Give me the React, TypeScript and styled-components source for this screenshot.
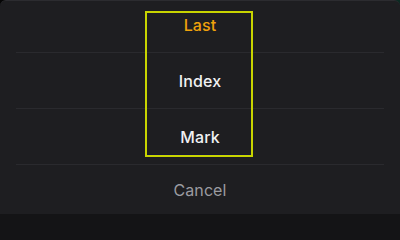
import React from "react";
import styled, { createGlobalStyle } from "styled-components";

const Global = createGlobalStyle`
  html, body { margin: 0; padding: 0; background: #141416; }
  body {
    width: 400px;
    height: 218px;
    overflow: hidden;
    font-family: "Inter", "Noto Sans", sans-serif;
  }
`;

const Backdrop = styled.div`
  width: 400px;
  height: 214px;
  background: linear-gradient(90deg, #050505 50%, #0c2a22 50%);
`;

const Sheet = styled.div`
  position: relative;
  width: 400px;
  height: 214px;
  box-sizing: border-box;
  background: #1e1e21;
  border-top: 1px solid #2c2c30;
  border-radius: 6px 6px 0 0;
  overflow: hidden;
`;

const List = styled.div`
  display: flex;
  flex-direction: column;
  margin-top: -4px;
`;

const Option = styled.div<{ $active?: boolean; $muted?: boolean; $last?: boolean }>`
  height: ${(p) => (p.$last ? "50px" : "56px")};
  display: flex;
  align-items: center;
  justify-content: center;
  margin: 0 16px;
  border-bottom: ${(p) => (p.$last ? "none" : "1px solid #2a2a2e")};
  box-sizing: border-box;
  font-size: 16px;
  font-weight: ${(p) => (p.$muted ? 400 : 500)};
  color: ${(p) => (p.$active ? "#f0a20b" : p.$muted ? "#9b9ba0" : "#f0f1f3")};
  letter-spacing: 0.1px;
`;

const Focus = styled.div`
  position: absolute;
  left: 145px;
  top: 10px;
  width: 108px;
  height: 146px;
  box-sizing: border-box;
  border: 2px solid #c8d400;
  box-shadow: inset 0 -1px 0 #15153a;
  pointer-events: none;
`;

export default function App() {
  const items = [
    { label: "Last", active: true },
    { label: "Index" },
    { label: "Mark" },
  ];
  return (
    <>
      <Global />
      <Backdrop>
        <Sheet>
          <List>
            {items.map((it) => (
              <Option key={it.label} $active={it.active}>
                {it.label}
              </Option>
            ))}
            <Option $muted $last>
              Cancel
            </Option>
          </List>
          <Focus />
        </Sheet>
      </Backdrop>
    </>
  );
}
